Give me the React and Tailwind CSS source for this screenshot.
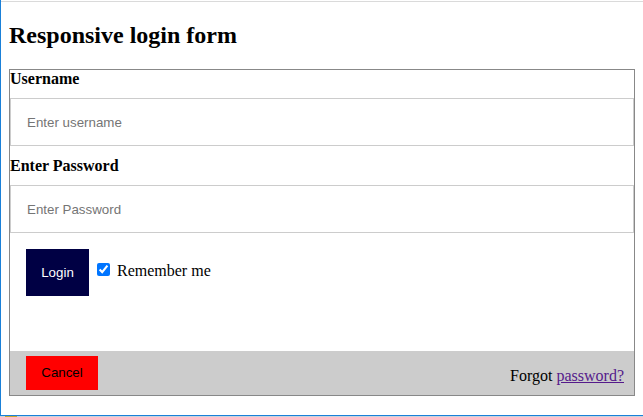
import { useState } from "react";

const serif = { fontFamily: '"Liberation Serif", "Times New Roman", serif' };
const sans = { fontFamily: '"Liberation Sans", Arial, sans-serif' };

export default function App() {
  const [remember, setRemember] = useState(true);

  return (
    <div className="w-[643px] h-[417px] bg-white overflow-hidden flex flex-col" style={serif}>
      {/* window frame */}
      <div className="h-[416px] border-l border-b border-[#1a80d8] flex flex-col">
        <div className="h-px mt-px bg-[#dadada]" />

        <div className="px-[8px]">
          <h2 className="mt-[19px] text-[24px] leading-[28px] font-bold text-black">Responsive login form</h2>

          {/* Form box */}
          <form className="mt-[20px] border border-[#888888]" onSubmit={(e) => e.preventDefault()}>
            <label className="block h-[18px] leading-[18px] text-[16px] font-bold text-black">Username</label>
            <input
              type="text"
              placeholder="Enter username"
              className="block w-full mt-[10px] h-[48px] pl-[16px] border border-[#cccccc] text-[13.33px] outline-none placeholder:text-[#757575]"
              style={sans}
            />

            <label className="block mt-[11px] h-[18px] leading-[18px] text-[16px] font-bold text-black">Enter Password</label>
            <input
              type="password"
              placeholder="Enter Password"
              className="block w-full mt-[10px] h-[48px] pl-[16px] border border-[#cccccc] text-[13.33px] outline-none placeholder:text-[#757575]"
              style={sans}
            />

            {/* Login row */}
            <div className="mt-[16px] mb-[55px] pl-[16px] flex items-start">
              <button type="submit" className="h-[47px] w-[63px] bg-[#000044] text-white text-[13.33px]" style={sans}>
                Login
              </button>
              <input
                type="checkbox"
                checked={remember}
                onChange={(e) => setRemember(e.target.checked)}
                className="mt-[14px] ml-[8px] w-[13px] h-[13px] accent-[#0075ff]"
              />
              <span className="mt-[13px] ml-[7px] text-[16px] leading-[18px] text-black">Remember me</span>
            </div>

            {/* Footer */}
            <div className="h-[44px] bg-[#cccccc] flex justify-between items-start pl-[16px] pr-[10px]">
              <button type="button" className="mt-[5px] h-[34px] w-[72px] bg-[#ff0000] text-black text-[13.33px]" style={sans}>
                Cancel
              </button>
              <span className="pt-[16px] text-[16px] leading-[18px] text-black">
                Forgot <a href="#" className="text-[#551a8b] underline">password?</a>
              </span>
            </div>
          </form>
        </div>
      </div>
      <div className="h-px bg-[#c9d3dc] pl-[5px]">
        <div className="w-[12px] h-px bg-[#c8a832]" />
      </div>
    </div>
  );
}
